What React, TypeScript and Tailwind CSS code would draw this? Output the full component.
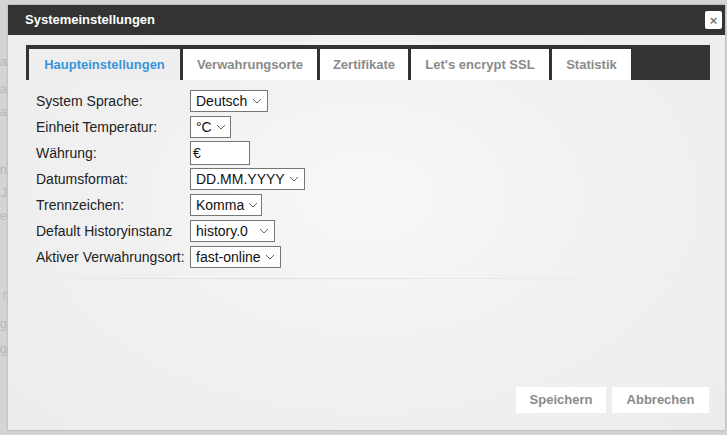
import React from 'react';

const tabs = [
  { label: 'Haupteinstellungen', w: 'w-[151px]', active: true },
  { label: 'Verwahrungsorte', w: 'w-[134px]' },
  { label: 'Zertifikate', w: 'w-[88px]' },
  { label: "Let's encrypt SSL", w: 'w-[138px]' },
  { label: 'Statistik', w: 'w-[79px]' },
];

function Chevron() {
  return (
    <svg width="10" height="6" viewBox="0 0 10 6" className="shrink-0">
      <polyline points="1,1 5,5 9,1" fill="none" stroke="#666" strokeWidth="1" />
    </svg>
  );
}

function Select({ value, w }: { value: string; w: string }) {
  return (
    <div className={`${w} h-[22px] bg-white border border-[#767676] flex items-center justify-between gap-[4px] pl-[5px] pr-[5px] text-[14px] text-[#111]`}>
      <span className="whitespace-nowrap">{value}</span>
      <Chevron />
    </div>
  );
}

const rows: { label: string; value: string; w: string; input?: boolean }[] = [
  { label: 'System Sprache:', value: 'Deutsch', w: 'w-[78px]' },
  { label: 'Einheit Temperatur:', value: '°C', w: 'w-[41px]' },
  { label: 'Währung:', value: '€', w: 'w-[60px]', input: true },
  { label: 'Datumsformat:', value: 'DD.MM.YYYY', w: 'min-w-[111px]' },
  { label: 'Trennzeichen:', value: 'Komma', w: 'w-[72px]' },
  { label: 'Default Historyinstanz', value: 'history.0', w: 'w-[85px]' },
  { label: 'Aktiver Verwahrungsort:', value: 'fast-online', w: 'w-[91px]' },
];

// faint letters of the page that lies behind the dialog
const behind = [
  { t: 'a', m: 'mt-[50px]' },
  { t: 'a', m: 'mt-[14px]' },
  { t: 'a', m: 'mt-[10px]' },
  { t: 'n', m: 'mt-[45px]' },
  { t: 'J', m: 'mt-[10px]' },
  { t: 'e', m: 'mt-[10px]' },
  { t: 'r', m: 'mt-[66px]' },
  { t: 'g', m: 'mt-[16px]' },
  { t: 'g', m: 'mt-[12px]' },
];

export default function App() {
  return (
    <div className="w-[727px] h-[435px] bg-[#d4d4d4] overflow-hidden flex pt-[5px] pb-[5px] pr-[2px] font-['Liberation_Sans',Arial,sans-serif]">
      <div className="w-[8px] shrink-0 text-[13px] text-[#b8b8b8] flex flex-col items-end pr-[1px] leading-none">
        {behind.map((b, i) => (
          <span key={i} className={b.m}>
            {b.t}
          </span>
        ))}
      </div>

      <div className="flex-1 flex flex-col bg-[#eeeeee] bg-[radial-gradient(ellipse_at_50%_45%,#f8f8f8_0%,#f1f1f1_45%,#ececec_100%)] shadow-[0_0_2px_rgba(0,0,0,0.25)]">
        {/* title bar */}
        <div className="h-[30px] bg-[#333333] flex items-center justify-between pl-[17px] pr-[3px] shrink-0">
          <span className="text-white font-bold text-[13px]">Systemeinstellungen</span>
          <div className="w-[17px] h-[18px] bg-white rounded-[2px] flex items-center justify-center text-[#777] font-bold text-[13px] leading-none">
            ×
          </div>
        </div>

        {/* tabs */}
        <div className="mt-[10px] ml-[18px] mr-[15px] h-[35px] bg-[#333333] flex items-end gap-[3px] pl-[3px] shrink-0">
          {tabs.map((t) => (
            <div
              key={t.label}
              className={`${t.w} h-[31px] flex items-center justify-center font-bold text-[13px] ${
                t.active ? 'bg-[#eeeeee] text-[#3a95d8]' : 'bg-white text-[#8a8a8a]'
              }`}
            >
              {t.label}
            </div>
          ))}
        </div>

        {/* form */}
        <div className="mt-[8px] ml-[28px] flex flex-col">
          {rows.map((r) => (
            <div key={r.label} className="h-[26px] flex items-center">
              <span className="w-[154px] text-[14px] text-[#222]">{r.label}</span>
              {r.input ? (
                <div className={`${r.w} h-[24px] bg-white border border-[#767676] flex items-center pl-[2px] text-[14px] text-[#111]`}>
                  {r.value}
                </div>
              ) : (
                <Select value={r.value} w={r.w} />
              )}
            </div>
          ))}
        </div>

        <div className="mt-[8px] mx-[16px] h-px bg-[linear-gradient(to_right,transparent,#e2e2e2_20%,#e2e2e2_50%,transparent)]" />

        {/* buttons */}
        <div className="mt-auto mb-[17px] mr-[16px] flex justify-end gap-[6px]">
          <div className="w-[90px] h-[26px] bg-white flex items-center justify-center font-bold text-[13px] text-[#8a8a8a]">
            Speichern
          </div>
          <div className="w-[97px] h-[26px] bg-white flex items-center justify-center font-bold text-[13px] text-[#8a8a8a]">
            Abbrechen
          </div>
        </div>
      </div>
    </div>
  );
}
